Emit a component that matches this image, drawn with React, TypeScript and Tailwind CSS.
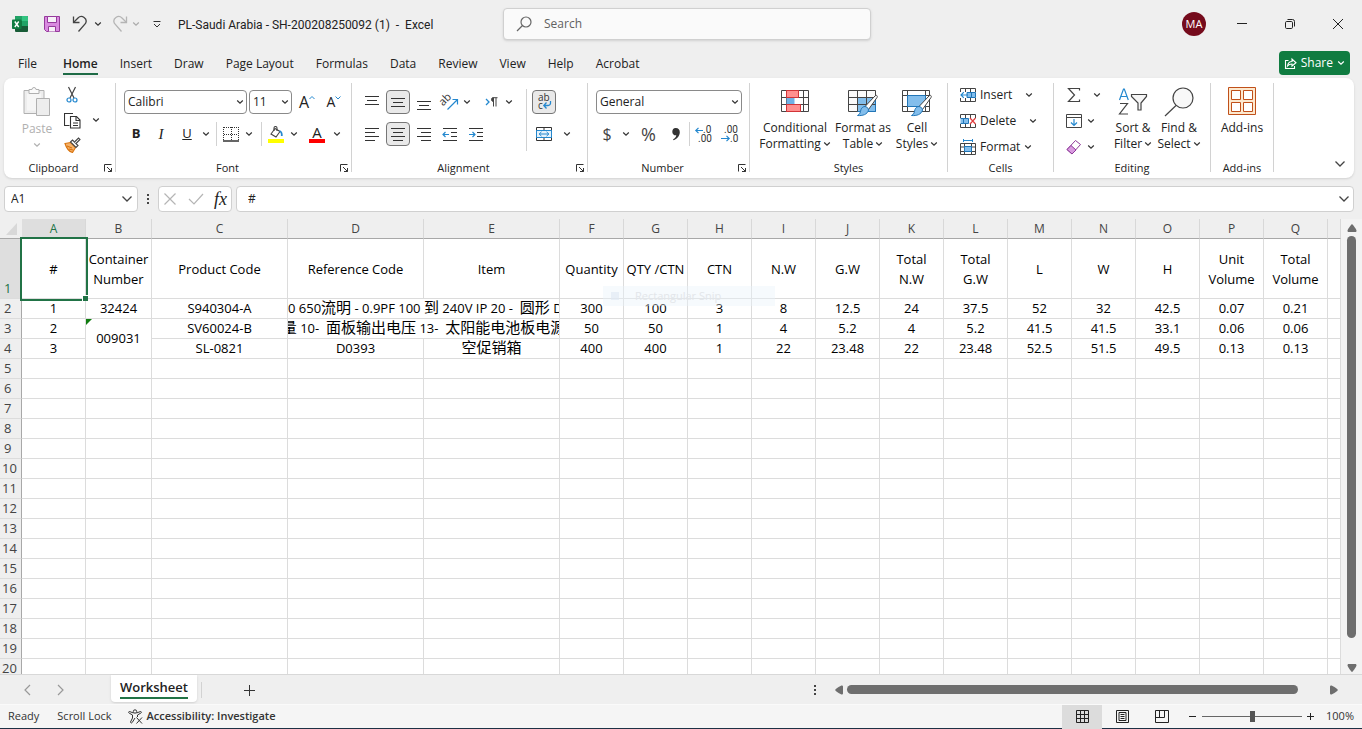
import type { ReactNode } from 'react';
import clsx from 'clsx';

type Column = { name: string; width: string };

const columns: Column[] = [
  { name: 'A', width: 'w-16' },
  { name: 'B', width: 'w-[66px]' },
  { name: 'C', width: 'w-[136px]' },
  { name: 'D', width: 'w-[136px]' },
  { name: 'E', width: 'w-[136px]' },
  ...'FGHIJKLMNOPQ'.split('').map((name) => ({ name, width: 'w-16' })),
];

const headings = [
  '#',
  'Container\nNumber',
  'Product Code',
  'Reference Code',
  'Item',
  'Quantity',
  'QTY /CTN',
  'CTN',
  'N.W',
  'G.W',
  'Total\nN.W',
  'Total\nG.W',
  'L',
  'W',
  'H',
  'Unit\nVolume',
  'Total\nVolume',
];

const amounts = [
  ['300', '100', '3', '8', '12.5', '24', '37.5', '52', '32', '42.5', '0.07', '0.21'],
  ['50', '50', '1', '4', '5.2', '4', '5.2', '41.5', '41.5', '33.1', '0.06', '0.06'],
  ['400', '400', '1', '22', '23.48', '22', '23.48', '52.5', '51.5', '49.5', '0.13', '0.13'],
];

const emptyRows = Array.from({ length: 16 }, (_, i) => i + 5);

const menuTabs = [
  'Insert',
  'Draw',
  'Page Layout',
  'Formulas',
  'Data',
  'Review',
  'View',
  'Help',
  'Acrobat',
];

/* ---------- shared bits ---------- */

function Chevron({ className = 'text-[#333]' }: { className?: string }) {
  return (
    <svg viewBox="0 0 8 8" className={clsx('h-2 w-2 shrink-0', className)} fill="none" stroke="currentColor" strokeWidth="1.2">
      <path d="M1.2 2.5 4 5.2 6.8 2.5" />
    </svg>
  );
}

function BigChevron() {
  return (
    <svg viewBox="0 0 12 8" className="h-2 w-3 shrink-0 text-[#444]" fill="none" stroke="currentColor" strokeWidth="1.3">
      <path d="m1.500 1.500 4.500 4.500 4.500-4.500" />
    </svg>
  );
}

function Tool({
  label,
  className = 'w-[26px]',
  active,
  children,
}: {
  label: string;
  className?: string;
  active?: boolean;
  children: ReactNode;
}) {
  return (
    <button aria-label={label} className={clsx('flex h-6 shrink-0 items-center justify-center', className)}>
      {active ? (
        <span className="flex h-6 w-6 items-center justify-center rounded border border-[#767676] bg-[#e9e9e9]">
          {children}
        </span>
      ) : (
        children
      )}
    </button>
  );
}

function More({ label, className = 'w-2' }: { label: string; className?: string }) {
  return (
    <Tool label={label} className={className}>
      <Chevron />
    </Tool>
  );
}

function Group({
  title,
  width,
  launcher,
  children,
}: {
  title: string;
  width: string;
  launcher?: boolean;
  children: ReactNode;
}) {
  return (
    <section className={clsx('flex shrink-0 flex-col border-r border-[#d2d2d2]', width)}>
      <div className="flex flex-1">{children}</div>
      <div className="-mb-1 flex h-4 items-center">
        <h2 className="flex-1 text-center text-[11px] leading-4">{title}</h2>
        {launcher && (
          <button aria-label={`${title} settings`} className="mr-[2px]">
            <svg viewBox="0 0 10 10" className="h-[10px] w-[10px]" fill="none" stroke="#333">
              <path d="M1.500 8.500v-7h7M4 4l4.500 4.500M8.500 5v3.500H5" />
            </svg>
          </button>
        )}
      </div>
    </section>
  );
}

function Divider({ className }: { className: string }) {
  return <span className={clsx('w-px shrink-0 bg-[#d2d2d2]', className)} />;
}

function Picker({ label, value, width }: { label: string; value: string; width: string }) {
  return (
    <label className={clsx('relative flex h-6 items-center', width)}>
      <select
        aria-label={label}
        className="h-6 w-full appearance-none rounded border border-[#8a8a8a] bg-white pl-[3px] text-xs text-[#222]"
      >
        <option>{value}</option>
      </select>
      <span className="pointer-events-none absolute right-[3px]">
        <Chevron />
      </span>
    </label>
  );
}

/* ---------- icons ---------- */

function Lines({ rows }: { rows: [number, number, number][] }) {
  return (
    <svg viewBox="0 0 16 16" className="h-4 w-4" stroke="#333" fill="none">
      {rows.map(([y, from, to]) => (
        <path key={y} d={`M${from} ${y}.5H${to}`} />
      ))}
    </svg>
  );
}

function IndentIcon({ right }: { right?: boolean }) {
  return (
    <svg viewBox="0 0 16 16" className="h-4 w-4" fill="none" stroke="#333">
      <path d="M1 2.500h14M9 6.500h6M9 10.500h6M1 14.500h14" />
      {right ? (
        <path d="M1 8.500h6M4.500 6 7 8.500 4.500 11" stroke="#2488cf" strokeWidth="1.2" />
      ) : (
        <path d="M7 8.500H1M3.500 6 1 8.500 3.500 11" stroke="#2488cf" strokeWidth="1.2" />
      )}
    </svg>
  );
}

function ExcelIcon() {
  return (
    <svg viewBox="0 0 16 16" className="h-4 w-4">
      <rect x="3" y="0" width="13" height="16" rx="1" fill="#185c37" />
      <path d="M4 0h6v5H3V1a1 1 0 0 1 1-1Z" fill="#21a366" />
      <path d="M10 0h5a1 1 0 0 1 1 1v4h-6Z" fill="#33c481" />
      <path d="M3 5h7v5H3z" fill="#107c41" />
      <path d="M10 5h6v5h-6z" fill="#21a366" />
      <rect y="3.5" width="9.5" height="9.5" rx=".8" fill="#107c41" />
      <path d="m2.800 5.500 3.900 5.500M6.700 5.500 2.800 11" stroke="#fff" strokeWidth="1.4" />
    </svg>
  );
}

function SaveIcon() {
  return (
    <svg viewBox="0 0 16 16" className="h-4 w-4" fill="#d98ae0" stroke="#963a9c">
      <path d="M.5.5h15v15H2.500l-2-2Z" />
      <path d="M3.500.5h9v6h-9z" fill="#f7f0f8" />
      <path d="M4.500 15.500v-5h7v5" fill="#f7f0f8" />
    </svg>
  );
}

function UndoIcon({ redo }: { redo?: boolean }) {
  return (
    <svg viewBox="0 0 16 18" className={clsx('h-[18px] w-4', redo && 'scale-x-[-1]')} fill="none" stroke={redo ? '#b5b5b5' : '#444'} strokeWidth="1.3">
      <path d="M1.500 1.500v6h6" />
      <path d="M1.500 7.500 6 3a4.700 4.700 0 0 1 7.500 5.500L6.500 16.500" />
    </svg>
  );
}

function PasteIcon() {
  return (
    <svg viewBox="0 0 28 32" className="h-8 w-7" stroke="#b0b0b0" fill="#ededed">
      <path d="M1 4.500h20v23H1z" />
      <path d="M4 7.500h14v17H4z" fill="#f6f6f6" stroke="none" />
      <path d="M6 7.500v-4h3a2 2 0 0 1 4 0h3v4Z" fill="#fafafa" />
      <path d="M13.500 12.500h13v17h-13z" />
    </svg>
  );
}

function CutIcon() {
  return (
    <svg viewBox="0 0 14 18" className="h-[18px] w-[14px]" fill="none" stroke="#444" strokeWidth="1.200">
      <path d="m3.500 1 5.500 11M10.500 1 5 12" />
      <circle cx="4" cy="14" r="2" stroke="#2488cf" />
      <circle cx="10" cy="14" r="2" stroke="#2488cf" />
    </svg>
  );
}

function CopyIcon() {
  return (
    <svg viewBox="0 0 17 17" className="h-[17px] w-[17px]" fill="#fff" stroke="#333" strokeWidth="1.100">
      <path d="M5.500 13.500h-5v-12h4M4 1.500h5" />
      <path d="M6.500 4.500h6l3.500 3.500v8H6.500z" />
      <path d="M12 4.500V8.500h4M9 11h5M9 13.500h5" fill="none" />
    </svg>
  );
}

function BrushIcon() {
  return (
    <svg viewBox="0 0 17 16" className="h-4 w-[17px]" fill="none" stroke="#444" strokeWidth="1.100">
      <path d="M1 6.500 6.500 5.500l5 5-3 5C5 14.500 2.500 11.500 1 6.500Z" fill="#f6b36b" stroke="#d9730d" />
      <path d="m3 9 5 2M5 12l4 1" stroke="#d9730d" />
      <path d="m6.500 5 2-2 5.500 5.500-2 2Z" fill="#fff" />
      <path d="m10.500 5 4-4 1.500 1.500-4 4" fill="#fff" />
    </svg>
  );
}

function BorderIcon() {
  return (
    <svg viewBox="0 0 16 16" className="h-4 w-4" stroke="#333" fill="none">
      <path d="M.5 1v14M8.500 1v14M15.500 1v14M1 1.500h14M1 8.500h14" strokeDasharray="1 1" />
      <path d="M0 15h16" strokeWidth="1.500" />
    </svg>
  );
}

function FillIcon() {
  return (
    <svg viewBox="0 0 16 17" className="h-[17px] w-4" fill="none" stroke="#444" strokeWidth="1.100">
      <path d="M7 2.500 3 8l5 3 4-5.500Z" fill="#fff" />
      <path d="M6 5V2a1.500 1.500 0 0 1 3 0v3" />
      <path d="M11.500 5c2 .5 2.500 2 2.300 5" stroke="#2488cf" strokeWidth="1.800" />
      <path d="M0 13h16v4H0z" fill="#ff0" stroke="none" />
    </svg>
  );
}

function OrientationIcon() {
  return (
    <svg viewBox="0 0 16 16" className="h-4 w-4 overflow-visible">
      <text x="-1" y="10" fontSize="11" fill="#333" transform="rotate(-45 3 9)">
        ab
      </text>
      <path d="M5.500 15.500 15 6M10.500 5.500h5v5" stroke="#2488cf" strokeWidth="1.200" fill="none" />
    </svg>
  );
}

function DirectionIcon() {
  return (
    <svg viewBox="0 0 14 12" className="h-3 w-[14px]" fill="none" stroke="#444">
      <path d="m1 3 3 3-3 3" stroke="#2488cf" strokeWidth="1.300" />
      <path d="M8.500 2v8.500M11 2v8.500M12.500 1.700H8.500" />
      <path d="M8.500 1.500a2 2 0 0 0 0 4Z" fill="#444" />
    </svg>
  );
}

function WrapIcon() {
  return (
    <svg viewBox="0 0 16 18" className="h-[18px] w-4 overflow-visible">
      <text x="2" y="8" fontSize="10" fill="#333">
        ab
      </text>
      <text x="2" y="16" fontSize="10" fill="#333">
        c
      </text>
      <path d="M14.500 8v1.500a2.500 2.500 0 0 1-2.500 3H8M10.500 9.500 7.800 12.500l2.700 3" stroke="#2488cf" strokeWidth="1.300" fill="none" />
    </svg>
  );
}

function MergeIcon() {
  return (
    <svg viewBox="0 0 16 16" className="h-4 w-4" stroke="#333" fill="none">
      <path d="M.5 1.500h15v13H.5zM8 1.500v3M8 11.500v3" />
      <path d="M.5 4.500h15v7H.5z" fill="#e5f2fb" stroke="#2488cf" />
      <path d="M3 8h10M5.500 5.800 3.200 8l2.300 2.200M10.500 5.800 12.800 8l-2.300 2.200" stroke="#2488cf" />
    </svg>
  );
}

function DecimalIcon({ less }: { less?: boolean }) {
  return (
    <svg viewBox="0 0 17 17" className="h-[17px] w-[17px] overflow-visible font-[Roboto,sans-serif]" fontSize="10" fill="#333">
      <text x={less ? 3 : 8} y="7">
        {less ? '.00' : '.0'}
      </text>
      <text x={less ? 9 : 3} y="16">
        {less ? '.0' : '.00'}
      </text>
      <path
        d={less ? 'M0 12.500h8M5.500 9.800 8.200 12.500l-2.700 2.700' : 'M8 4.500H1M3.500 1.800.8 4.500l2.700 2.700'}
        stroke="#2488cf"
        strokeWidth="1.200"
        fill="none"
      />
    </svg>
  );
}

function PaintBrush() {
  return (
    <g>
      <path d="m17 17.500 10-10.500c1.500-1.500 3 0 2 1.500l-8.500 12Z" fill="#fff" stroke="#444" />
      <path d="M17 17.500c2 .3 3.300 1.500 3.500 3.500-1 4.500-6 6-11 5.500 3-1.500 2.500-3 3.500-6 .8-2 2.300-3 4-3Z" fill="#83beec" stroke="#2176b8" />
    </g>
  );
}

function ConditionalIcon() {
  return (
    <svg viewBox="0 0 28 28" className="h-7 w-7" fill="none" stroke="#444">
      <path d="M.5 3.500h27v21H.5zM.5 10.500h27M.5 17.500h27M5.500 3.500v21M16.500 3.500v21M22.500 3.500v21" />
      <path d="M5.500 3.500h12v7h-12zM5.500 17.500h14v7h-14z" fill="#ff8f8f" stroke="#d13438" />
      <path d="M5.500 11h8v6h-8z" fill="#6fb1e6" stroke="none" />
      <path d="M14 11h8v6h-8z" fill="#fff" stroke="none" />
    </svg>
  );
}

function FormatTableIcon() {
  return (
    <svg viewBox="0 -2 31 30" className="h-[30px] w-[31px]" fill="none" stroke="#444">
      <path d="M.5 1.500h27v21H.5z" fill="#fafafa" />
      <path d="M9.500 8.500h18v14h-18z" fill="#83beec" stroke="#2176b8" />
      <path d="M.5 8.500h27M.5 15.500h27M9.500 1.500v21M18.500 1.500v21" />
      <PaintBrush />
    </svg>
  );
}

function CellStylesIcon() {
  return (
    <svg viewBox="0 -2 31 30" className="h-[30px] w-[31px]" fill="none" stroke="#444">
      <path d="M.5 1.500h27v21H.5zM.5 6.500h27M.5 17.500h27M5.500 1.500v21M23.500 1.500v21" />
      <path d="M5.500 6.500h18v11h-18z" fill="#83beec" stroke="#2176b8" />
      <PaintBrush />
    </svg>
  );
}

function CellsIcon({ kind }: { kind: 'insert' | 'delete' | 'format' }) {
  return (
    <svg viewBox="0 0 16 16" className="h-4 w-4" fill="none" stroke="#444">
      {kind === 'format' ? (
        <>
          <path d="M.5 4.500h15v11H.5zM.5 8h15M.5 12.500h15M4.500 4.500v11M11.500 4.500v11" />
          <path d="M4.500 7.500h7v5h-7z" fill="#83beec" stroke="#2176b8" />
          <path d="M3.500 0v3M12.500 0v3M3.500 1.500h9" stroke="#2488cf" />
        </>
      ) : (
        <>
          <path d="M.5 5V1.500h15V5M.5 11v3.500h15V11M5.500 1.500V5M10.500 1.500V5M5.500 11v3.500M10.500 11v3.500" />
          {kind === 'insert' ? (
            <>
              <path d="M7 5.500h8.500v5H7zM11.500 5.500v5" fill="#83beec" stroke="#2176b8" />
              <path d="M8 8H1M3.800 5.200 1 8l2.800 2.800" stroke="#2488cf" strokeWidth="1.200" />
            </>
          ) : (
            <>
              <path d="M.5 5.500h3v5h-3M3.500 5.500h5v5h-5z" fill="#83beec" stroke="#2176b8" />
              <path d="m10 5 5.500 6M15.500 5 10 11" stroke="#e03c3c" strokeWidth="1.200" />
            </>
          )}
        </>
      )}
    </svg>
  );
}

function SigmaIcon() {
  return (
    <svg viewBox="0 0 14 16" className="h-4 w-[14px]" fill="none" stroke="#444" strokeWidth="1.200">
      <path d="M12.500 3.500v-2H1.500l6 6.500-6 6.500h11v-2" />
    </svg>
  );
}

function FillDownIcon() {
  return (
    <svg viewBox="0 0 16 14" className="h-[14px] w-4" fill="none" stroke="#444">
      <path d="M.5.5h15v13H.5zM.5 3.500h15" />
      <path d="M8 5v6.500M5 8.500l3 3 3-3" stroke="#2488cf" strokeWidth="1.200" />
    </svg>
  );
}

function EraserIcon() {
  return (
    <svg viewBox="0 0 16 16" className="h-4 w-4" fill="#fff" stroke="#8e3a99">
      <path d="m9.500 1.500 5 4-8.500 9.500L1 10.500Z" />
      <path d="m5 6.500 5 4.500L6 15 1 10.500Z" fill="#d99be0" />
    </svg>
  );
}

function SortIcon() {
  return (
    <svg viewBox="0 0 30 30" className="h-[30px] w-[30px]" fill="none" stroke="#444" strokeWidth="1.200">
      <path d="m1.500 13 4-11h.8l4 11M3 9.500h6" stroke="#2488cf" />
      <path d="M2 16.500h7.500L1.500 27h8.500" />
      <path d="M13.500 7.500h15v2L23 16v7h-3v-7l-6.500-6.500Z" fill="#f6f6f6" />
    </svg>
  );
}

function FindIcon() {
  return (
    <svg viewBox="0 0 30 30" className="h-[30px] w-[30px]" fill="#f8f8f8" stroke="#444" strokeWidth="1.200">
      <circle cx="19" cy="11" r="10" />
      <path d="M12 18.500 1 29" />
    </svg>
  );
}

function AddinsIcon() {
  return (
    <svg viewBox="0 0 28 28" className="h-7 w-7" fill="#fff" stroke="#c0501a">
      <path d="M.5.5h27v27H.5z" fill="#fde9cf" />
      <path d="M3.500 3.500h9v9h-9zM15.500 3.500h9v9h-9zM3.500 15.500h9v9h-9zM15.500 15.500h9v9h-9z" />
    </svg>
  );
}

/* ---------- page sections ---------- */

function TitleBar() {
  return (
    <header className="grid h-12 grid-cols-[503fr_368px_491fr] items-center">
      <div className="flex items-center pl-3">
        <ExcelIcon />
        <button aria-label="Save" className="ml-4">
          <SaveIcon />
        </button>
        <button aria-label="Undo" className="ml-3">
          <UndoIcon />
        </button>
        <span className="ml-1">
          <More label="Undo history" className="w-3" />
        </span>
        <button aria-label="Redo" className="ml-2">
          <UndoIcon redo />
        </button>
        <button aria-label="Redo history" className="ml-1">
          <Chevron className="text-[#aaa]" />
        </button>
        <button aria-label="Customize toolbar" className="ml-3">
          <svg viewBox="0 0 10 8" className="h-2 w-[10px]" fill="none" stroke="#333">
            <path d="M1.500 1.500h7M2 4l3 3 3-3" />
          </svg>
        </button>
        <h1 className="ml-4 pt-[2px] font-[Roboto,sans-serif] text-xs whitespace-pre text-[#222]">
          PL-Saudi Arabia - SH-200208250092 (1)  -  Excel
        </h1>
      </div>
      <label className="flex h-8 items-center gap-3 rounded border border-[#d0d0d0] bg-[#fafafa] pl-3 shadow-sm">
        <svg viewBox="0 0 16 16" className="h-4 w-4" fill="none" stroke="#666" strokeWidth="1.200">
          <circle cx="10" cy="6" r="5" />
          <path d="M6.500 9.500 1 15" />
        </svg>
        <input
          type="search"
          aria-label="Search"
          placeholder="Search"
          className="flex-1 bg-transparent text-xs outline-none placeholder:text-[#616161]"
        />
      </label>
      <div className="flex items-center justify-end pr-4">
        <button className="mr-7 flex h-6 w-6 items-center justify-center rounded-full bg-[#750b1c] text-[11px] text-white">
          MA
        </button>
        <div className="flex gap-8">
          <Tool label="Minimize" className="w-4">
            <svg viewBox="0 0 12 12" className="h-3 w-3" stroke="#222">
              <path d="M1 5.500h10" />
            </svg>
          </Tool>
          <Tool label="Restore" className="w-4">
            <svg viewBox="0 0 12 12" className="h-3 w-3" stroke="#222" fill="none">
              <rect x="1.5" y="3.5" width="7" height="7" rx="1.2" />
              <path d="M3.500 1.500h5a2 2 0 0 1 2 2v5" />
            </svg>
          </Tool>
          <Tool label="Close" className="w-4">
            <svg viewBox="0 0 12 12" className="h-3 w-3" stroke="#222">
              <path d="m1 1 10 10M11 1 1 11" />
            </svg>
          </Tool>
        </div>
      </div>
    </header>
  );
}

function MenuTabs() {
  return (
    <nav className="flex h-[30px] items-start justify-between pr-3 pl-[18px]">
      <div className="flex items-start gap-[22px] pt-2 text-xs leading-4">
        <button className="mr-1">File</button>
        <button className="border-b-2 border-[#1e6b46] pb-px font-semibold">Home</button>
        {menuTabs.map((tab) => (
          <button key={tab}>{tab}</button>
        ))}
      </div>
      <button className="mt-[3px] flex h-6 items-center gap-1 rounded bg-[#107c41] px-[5px] text-xs text-white">
        <svg viewBox="0 0 13 13" className="h-[13px] w-[13px]" fill="none" stroke="#fff" strokeWidth="1.100">
          <path d="M4.500 3.500h-3v8h9v-2.500" />
          <path d="M3.500 9c.5-3 2-4.500 4.500-4.500V2l4 3.800L8 9V7C6 7 4.700 7.500 3.500 9Z" />
        </svg>
        Share
        <Chevron className="text-white" />
      </button>
    </nav>
  );
}

function BigButton({ icon, lines, more, className }: { icon: ReactNode; lines: string[]; more?: boolean; className: string }) {
  return (
    <button className={clsx('flex flex-col items-center justify-start pt-1 text-xs leading-4', className)}>
      <span className="flex h-[33px] items-start justify-center">{icon}</span>
      {lines.map((line, i) => (
        <span key={line} className="flex items-center gap-[2px] whitespace-nowrap">
          {line}
          {more && i === lines.length - 1 && <Chevron />}
        </span>
      ))}
    </button>
  );
}

function Ribbon() {
  return (
    <div className="mr-2 ml-1 flex h-[100px] items-stretch rounded-lg bg-white pt-[5px] pb-[6px] text-[#222] shadow">
      <Group title="Clipboard" width="w-28" launcher>
        <button className="ml-4 flex w-[34px] flex-col items-center pt-[3px] text-xs leading-4 text-[#b0b0b0]">
          <PasteIcon />
          <span className="mt-[3px]">Paste</span>
          <Chevron className="mt-1 text-[#b0b0b0]" />
        </button>
        <div className="ml-1 flex flex-col gap-[1px]">
          <Tool label="Cut" className="w-7">
            <CutIcon />
          </Tool>
          <span className="flex">
            <Tool label="Copy" className="w-7">
              <CopyIcon />
            </Tool>
            <More label="Copy options" className="w-5" />
          </span>
          <Tool label="Format Painter" className="w-7">
            <BrushIcon />
          </Tool>
        </div>
      </Group>

      <Group title="Font" width="w-[236px]" launcher>
        <div className="flex flex-col gap-2 pt-[7px] pl-2">
          <div className="flex">
            <Picker label="Font" value="Calibri" width="w-[123px]" />
            <span className="ml-[2px]">
              <Picker label="Font size" value="11" width="w-[43px]" />
            </span>
            <Tool label="Increase font size" className="ml-px w-7">
              <span className="text-base leading-5">A</span>
              <svg viewBox="0 0 6 16" className="h-4 w-[6px]" fill="none" stroke="#2488cf">
                <path d="m.5 5 2.500-2.500L5.500 5" />
              </svg>
            </Tool>
            <Tool label="Decrease font size" className="w-[26px]">
              <span className="text-sm leading-5">A</span>
              <svg viewBox="0 0 6 16" className="h-4 w-[6px]" fill="none" stroke="#2488cf">
                <path d="M.5 2.500 3 5l2.500-2.500" />
              </svg>
            </Tool>
          </div>
          <div className="flex items-center">
            <Tool label="Bold" className="w-6">
              <b className="text-[13px]">B</b>
            </Tool>
            <Tool label="Italic">
              <i className="font-['Liberation_Serif',serif] text-[15px]">I</i>
            </Tool>
            <Tool label="Underline">
              <u className="text-[13px]">U</u>
            </Tool>
            <More label="Underline style" className="w-3" />
            <Divider className="ml-1 h-6" />
            <Tool label="Borders" className="w-7">
              <BorderIcon />
            </Tool>
            <More label="Border style" />
            <Divider className="ml-2 h-6" />
            <Tool label="Fill color" className="w-7">
              <FillIcon />
            </Tool>
            <More label="Fill colors" />
            <Tool label="Font color" className="ml-[3px] w-8">
              <span className="border-b-4 border-[#f00] px-[3px] text-[15px] leading-[14px]">A</span>
            </Tool>
            <More label="Font colors" />
          </div>
        </div>
      </Group>

      <Group title="Alignment" width="w-[236px]" launcher>
        <div className="flex w-[174px] flex-col gap-2 pt-[7px] pl-[7px]">
          <div className="flex">
            <Tool label="Top align">
              <Lines rows={[[2, 1, 15], [6, 3, 13], [10, 1, 15]]} />
            </Tool>
            <Tool label="Middle align" active>
              <Lines rows={[[4, 1, 15], [8, 3, 13], [12, 1, 15]]} />
            </Tool>
            <Tool label="Bottom align">
              <Lines rows={[[7, 1, 15], [11, 3, 13], [15, 1, 15]]} />
            </Tool>
            <Tool label="Orientation">
              <OrientationIcon />
            </Tool>
            <More label="Orientation options" />
            <Tool label="Text direction" className="ml-2 w-[26px]">
              <DirectionIcon />
            </Tool>
            <More label="Text direction options" />
          </div>
          <div className="flex">
            <Tool label="Align left">
              <Lines rows={[[2, 1, 15], [6, 1, 11], [10, 1, 15], [14, 1, 11]]} />
            </Tool>
            <Tool label="Center" active>
              <Lines rows={[[2, 1, 15], [6, 3, 13], [10, 1, 15], [14, 3, 13]]} />
            </Tool>
            <Tool label="Align right">
              <Lines rows={[[2, 1, 15], [6, 5, 15], [10, 1, 15], [14, 5, 15]]} />
            </Tool>
            <Tool label="Decrease indent">
              <IndentIcon />
            </Tool>
            <Tool label="Increase indent">
              <IndentIcon right />
            </Tool>
          </div>
        </div>
        <Divider className="mt-[6px] h-[62px]" />
        <div className="flex flex-col gap-2 pt-[7px] pl-1">
          <Tool label="Wrap text" active>
            <WrapIcon />
          </Tool>
          <div className="flex">
            <Tool label="Merge and center">
              <MergeIcon />
            </Tool>
            <More label="Merge options" className="w-5" />
          </div>
        </div>
      </Group>

      <Group title="Number" width="w-[162px]" launcher>
        <div className="flex flex-col gap-2 pt-[7px] pl-2">
          <Picker label="Number format" value="General" width="w-[146px]" />
          <div className="flex items-center text-[#444]">
            <Tool label="Accounting format" className="w-[22px]">
              <span className="text-base">$</span>
            </Tool>
            <More label="Currency" className="w-4" />
            <Tool label="Percent style" className="w-[29px]">
              <span className="text-lg">%</span>
            </Tool>
            <Tool label="Comma style">
              <svg viewBox="0 0 10 14" className="h-[14px] w-[10px]" fill="#333">
                <path d="M4.500 1C7 .8 9 2.500 8.800 5.500 8.600 9 6 12 2.500 13.200l-.4-.9c2-1 3-2.300 3.200-4C3 8.700 1.300 7 1.300 4.700 1.300 2.500 2.600 1 4.500 1Z" />
              </svg>
            </Tool>
            <Divider className="h-6" />
            <Tool label="Increase decimal" className="w-[26px]">
              <DecimalIcon />
            </Tool>
            <Tool label="Decrease decimal">
              <DecimalIcon less />
            </Tool>
          </div>
        </div>
      </Group>

      <Group title="Styles" width="w-[198px]">
        <BigButton className="ml-2 w-[74px]" icon={<ConditionalIcon />} lines={['Conditional', 'Formatting']} more />
        <BigButton className="w-[62px]" icon={<FormatTableIcon />} lines={['Format as', 'Table']} more />
        <BigButton className="w-[46px]" icon={<CellStylesIcon />} lines={['Cell', 'Styles']} more />
      </Group>

      <Group title="Cells" width="w-[106px]">
        <div className="flex flex-col gap-[2px] pl-3 text-xs">
          <button className="flex h-6 items-center gap-1">
            <CellsIcon kind="insert" />
            <span className="w-[41px] text-left">Insert</span>
            <Chevron />
          </button>
          <button className="flex h-6 items-center gap-1">
            <CellsIcon kind="delete" />
            <span className="w-[45px] text-left">Delete</span>
            <Chevron />
          </button>
          <button className="flex h-6 items-center gap-1">
            <CellsIcon kind="format" />
            <span>Format</span>
            <Chevron />
          </button>
        </div>
      </Group>

      <Group title="Editing" width="w-[157px]">
        <div className="flex flex-col gap-[2px] pl-[7px]">
          <div className="flex">
            <Tool label="AutoSum">
              <SigmaIcon />
            </Tool>
            <More label="AutoSum functions" className="w-5" />
          </div>
          <div className="flex">
            <Tool label="Fill">
              <FillDownIcon />
            </Tool>
            <More label="Fill options" />
          </div>
          <div className="flex">
            <Tool label="Clear">
              <EraserIcon />
            </Tool>
            <More label="Clear options" />
          </div>
        </div>
        <BigButton className="ml-[3px] w-[46px]" icon={<SortIcon />} lines={['Sort &', 'Filter']} more />
        <BigButton className="w-[46px]" icon={<FindIcon />} lines={['Find &', 'Select']} more />
      </Group>

      <Group title="Add-ins" width="w-[63px]">
        <BigButton className="w-full" icon={<AddinsIcon />} lines={['Add-ins']} />
      </Group>

      <div className="flex flex-1 items-end justify-end pr-2 pb-1">
        <button aria-label="Collapse ribbon">
          <BigChevron />
        </button>
      </div>
    </div>
  );
}

function FormulaBar() {
  return (
    <div className="mt-2 mr-2 mb-[7px] ml-1 flex h-[26px] items-center text-xs text-[#222]">
      <label className="flex h-full w-[134px] items-center rounded border border-[#d0d0d0] bg-white pr-1 pl-[6px]">
        <input aria-label="Name box" defaultValue="A1" className="w-full min-w-0 outline-none" />
        <BigChevron />
      </label>
      <svg viewBox="0 0 4 12" className="mx-2 h-3 w-1" fill="#444">
        <path d="M1 1h2v2H1zM1 5h2v2H1zM1 9h2v2H1z" />
      </svg>
      <div className="flex h-full w-[74px] items-center justify-between rounded border border-[#d0d0d0] bg-white px-1">
        <button aria-label="Cancel">
          <svg viewBox="0 0 14 14" className="h-[14px] w-[14px]" stroke="#b5b5b5" strokeWidth="1.200">
            <path d="m1.500 1.500 11 11M12.500 1.500l-11 11" />
          </svg>
        </button>
        <button aria-label="Enter">
          <svg viewBox="0 0 16 12" className="h-3 w-4" fill="none" stroke="#b5b5b5" strokeWidth="1.200">
            <path d="m1 6 5 5L15 1" />
          </svg>
        </button>
        <button aria-label="Insert function" className="font-['Liberation_Serif',serif] text-lg leading-5 italic">
          fx
        </button>
      </div>
      <label className="ml-1 flex h-full flex-1 items-center rounded border border-[#d0d0d0] bg-white pr-[3px] pl-[11px]">
        <input aria-label="Formula" defaultValue="#" className="flex-1 outline-none" />
        <BigChevron />
      </label>
    </div>
  );
}

function Han({ children }: { children: string }) {
  return <span className="text-[15px] leading-none">{children}</span>;
}

const cell = 'overflow-hidden border-r border-b border-[#dcdcdc] p-0 text-center leading-[19px] whitespace-nowrap';

function RowHead({ row, selected }: { row: number; selected?: boolean }) {
  return (
    <th
      className={clsx(
        'border-r border-b border-r-[#a8a8a8] border-b-[#dcdcdc] p-0 text-left align-bottom leading-[19px] font-normal',
        row < 10 ? 'pl-1' : 'pl-[2px]',
        selected ? 'bg-[#dedede] text-[#217346]' : 'bg-[#efefef] text-[#444]'
      )}
    >
      {row}
    </th>
  );
}

function Sheet() {
  const codes = ['S940304-A', 'SV60024-B', 'SL-0821'];
  const items = [
    <td key="item" colSpan={2} className={cell}>
      <div className="flex h-[19px] justify-start overflow-hidden">
        <span className="shrink-0">
          0 650<Han>流明</Han> - 0.9PF 100 <Han>到</Han> 240V IP 20 - &nbsp;<Han>圆形</Han> D9
        </span>
      </div>
    </td>,
    <td key="item" colSpan={2} className={cell}>
      <div className="flex h-[19px] justify-center overflow-hidden">
        <span className="shrink-0">
          <Han>量</Han> 10- &nbsp;<Han>面板输出电压</Han> 13- &nbsp;<Han>太阳能电池板电源</Han>
        </span>
      </div>
    </td>,
  ];

  return (
    <main className="flex min-h-0 flex-1 overflow-hidden">
      <div className="relative min-w-0 flex-1 overflow-hidden bg-white">
        <table className="w-full table-fixed border-separate border-spacing-0 font-['Open_Sans','Noto_Sans_CJK_SC',sans-serif] text-[13px] text-black">
          <thead>
            <tr className="h-5 bg-[#efefef] text-xs text-[#444]">
              <th className="w-[22px] border-b border-[#a8a8a8] p-0">
                <svg viewBox="0 0 22 19" className="block h-[19px] w-[22px]" fill="#d8d8d8">
                  <path d="M17 4v12H6z" />
                </svg>
              </th>
              {columns.map(({ name, width }) => (
                <th
                  key={name}
                  className={clsx(
                    'border-r border-b border-r-[#d8d8d8] p-0 leading-[19px] font-normal',
                    width,
                    name === 'A' ? 'border-b-[#217346] bg-[#dedede] text-[#217346]' : 'border-b-[#a8a8a8]'
                  )}
                >
                  {name}
                </th>
              ))}
              <th className="border-r border-b border-r-[#d8d8d8] border-b-[#a8a8a8]" />
            </tr>
          </thead>
          <tbody>
            <tr className="h-[60px]">
              <RowHead row={1} selected />
              {headings.map((heading, i) => (
                <td
                  key={heading}
                  className={clsx(
                    'border-r border-b border-[#dcdcdc] p-0 text-center leading-5 whitespace-pre',
                    i === 0 && 'relative outline-2 outline-[#217346]'
                  )}
                >
                  {heading}
                  {i === 0 && (
                    <span className="absolute -right-[3px] -bottom-[3px] h-[6px] w-[6px] border-t border-l border-white bg-[#217346]" />
                  )}
                </td>
              ))}
              <td className={cell} />
            </tr>
            {amounts.map((values, i) => (
              <tr key={codes[i]} className="h-5">
                <RowHead row={i + 2} />
                <td className={cell}>{i + 1}</td>
                {i === 0 && <td className={cell}>32424</td>}
                {i === 1 && (
                  <td rowSpan={2} className={clsx(cell, 'relative')}>
                    <svg viewBox="0 0 6 6" className="absolute top-0 left-0 h-[6px] w-[6px]" fill="#107c10">
                      <path d="M0 0h6L0 6Z" />
                    </svg>
                    009031
                  </td>
                )}
                <td className={cell}>{codes[i]}</td>
                {items[i] ?? (
                  <>
                    <td className={cell}>D0393</td>
                    <td className={cell}>
                      <Han>空促销箱</Han>
                    </td>
                  </>
                )}
                {values.map((value, j) => (
                  <td key={j} className={cell}>
                    {value}
                  </td>
                ))}
                <td className={cell} />
              </tr>
            ))}
            {emptyRows.map((row) => (
              <tr key={row} className="h-5">
                <RowHead row={row} />
                {columns.map(({ name }) => (
                  <td key={name} className={cell} />
                ))}
                <td className={cell} />
              </tr>
            ))}
          </tbody>
        </table>

        {/* fading menu entry over the cells */}
        <div className="absolute top-[67px] left-[603px] flex h-5 w-[172px] items-center bg-[#e8f2fb]/40 pl-2 text-[11px] text-[#e3e6ea]">
          <span className="mr-4 h-2 w-2 bg-[#dfe8f3]/60" />
          Rectangular Snip
        </div>
      </div>

      <div className="flex w-[21px] flex-col items-center bg-[#f3f3f3] pt-[5px] pb-[2px]">
        <svg viewBox="0 0 10 8" className="h-2 w-[10px] shrink-0" fill="#6e6e6e">
          <path d="M5 0c.5 0 4.500 5.500 4.500 6.500S9 8 8.500 8h-7C1 8 .5 7.500.5 6.500S4.500 0 5 0Z" />
        </svg>
        <div className="my-1 w-[9px] flex-1 pb-[22px]">
          <div className="h-full rounded-full bg-[#6e6e6e]" />
        </div>
        <svg viewBox="0 0 10 8" className="h-2 w-[10px] shrink-0 rotate-180" fill="#6e6e6e">
          <path d="M5 0c.5 0 4.500 5.500 4.500 6.500S9 8 8.500 8h-7C1 8 .5 7.500.5 6.500S4.500 0 5 0Z" />
        </svg>
      </div>
    </main>
  );
}

function SheetTabs() {
  return (
    <div className="flex h-[30px] items-center border-t border-[#d8d8d8] pr-6">
      <div className="flex w-[111px] gap-5 pl-[22px]">
        {['m8 1-5 5 5 5', 'm4 1 5 5-5 5'].map((d, i) => (
          <button key={d} aria-label={i ? 'Next sheet' : 'Previous sheet'}>
            <svg viewBox="0 0 12 12" className="h-3 w-3" fill="none" stroke="#999" strokeWidth="1.200">
              <path d={d} />
            </svg>
          </button>
        ))}
      </div>
      <button className="flex h-[27px] items-start self-start rounded-b bg-white px-[9px] pt-[2px] text-[#222] shadow-sm">
        <span className="block border-b-2 border-[#217346] text-[13px] leading-5 font-semibold">Worksheet</span>
      </button>
      <Divider className="ml-1 h-4" />
      <button aria-label="New sheet" className="ml-[41px]">
        <svg viewBox="0 0 12 12" className="h-3 w-3" stroke="#333">
          <path d="M6.500 1v11M1 6.500h11" />
        </svg>
      </button>
      <div className="flex flex-1 items-center justify-end">
        <svg viewBox="0 0 4 12" className="mr-[18px] h-3 w-1" fill="#444">
          <path d="M1 1h2v2H1zM1 5h2v2H1zM1 9h2v2H1z" />
        </svg>
        <svg viewBox="0 0 8 10" className="mr-1 h-[10px] w-2" fill="#6e6e6e">
          <path d="M0 5c0-.5 5.500-4.500 6.500-4.500S8 1 8 1.500v7c0 .5-.5 1-1.500 1S0 5.500 0 5Z" />
        </svg>
        <div className="mr-8 h-[9px] w-5/12 rounded-full bg-[#6e6e6e]" />
        <svg viewBox="0 0 8 10" className="h-[10px] w-2 rotate-180" fill="#6e6e6e">
          <path d="M0 5c0-.5 5.500-4.500 6.500-4.500S8 1 8 1.500v7c0 .5-.5 1-1.500 1S0 5.500 0 5Z" />
        </svg>
      </div>
    </div>
  );
}

function StatusBar() {
  return (
    <footer className="flex h-[25px] items-center border-t border-b border-t-[#fafafa] border-b-[#1d3145] bg-[#f5f5f5] px-2 text-[11px] text-[#333]">
      <span>Ready</span>
      <span className="ml-[18px]">Scroll Lock</span>
      <button className="ml-4 flex items-center gap-1 font-semibold">
        <svg viewBox="0 0 15 15" className="h-[15px] w-[15px]" fill="none" stroke="#333">
          <circle cx="7" cy="2.5" r="1.7" />
          <path d="M5.500 4 1.500 2.500c-1 0-1.300 1.200-.3 1.600L4.500 6v3L2.500 13c0 1 1.200 1.300 1.700.5L7 9M8.500 4l4-1.500c1 0 1.300 1.200.3 1.600L9.500 6v2M8.500 8.500l5.500 6M14 8.500l-5.500 6" />
        </svg>
        Accessibility: Investigate
      </button>
      <div className="ml-auto flex h-full items-center">
        <Tool label="Normal view" className="w-10 bg-[#dcdcdc]">
          <svg viewBox="0 0 13 13" className="h-[13px] w-[13px]" fill="none" stroke="#222">
            <path d="M.5.5h12v12H.5zM4.500.5v12M8.500.5v12M.5 4.500h12M.5 8.500h12" />
          </svg>
        </Tool>
        <Tool label="Page layout view" className="w-10">
          <svg viewBox="0 0 13 13" className="h-[13px] w-[13px]" fill="none" stroke="#222">
            <path d="M.5.5h12v12H.5zM3 2.500h7v8H3zM4.500 4.500h4M4.500 6.500h4M4.500 8.500h4" />
          </svg>
        </Tool>
        <Tool label="Page break preview" className="w-10">
          <svg viewBox="0 0 14 13" className="h-[13px] w-[14px]" fill="none" stroke="#222">
            <path d="M.5.5h13v12H.5zM4.500.5v7M9.500.5v7M.5 7.500h9" />
          </svg>
        </Tool>
        <Tool label="Zoom out" className="w-5">
          <svg viewBox="0 0 9 9" className="h-[9px] w-[9px]" stroke="#222">
            <path d="M1 4.500h7" />
          </svg>
        </Tool>
        <input
          type="range"
          aria-label="Zoom"
          min={0}
          max={100}
          defaultValue={50}
          className="h-3 w-[100px] appearance-none bg-transparent [&::-webkit-slider-runnable-track]:h-px [&::-webkit-slider-runnable-track]:bg-[#666] [&::-webkit-slider-thumb]:-mt-[5px] [&::-webkit-slider-thumb]:h-[11px] [&::-webkit-slider-thumb]:w-[5px] [&::-webkit-slider-thumb]:appearance-none [&::-webkit-slider-thumb]:bg-[#555]"
        />
        <Tool label="Zoom in" className="w-4">
          <svg viewBox="0 0 9 9" className="h-[9px] w-[9px]" stroke="#222">
            <path d="M1 4.500h7M4.500 1v7" />
          </svg>
        </Tool>
        <span className="ml-2">100%</span>
      </div>
    </footer>
  );
}

export default function App() {
  return (
    <div className="flex h-screen min-w-0 flex-col overflow-hidden bg-[#efefef] font-['Open_Sans','Noto_Sans',sans-serif] text-[#222]">
      <TitleBar />
      <MenuTabs />
      <Ribbon />
      <FormulaBar />
      <Sheet />
      <SheetTabs />
      <StatusBar />
    </div>
  );
}
